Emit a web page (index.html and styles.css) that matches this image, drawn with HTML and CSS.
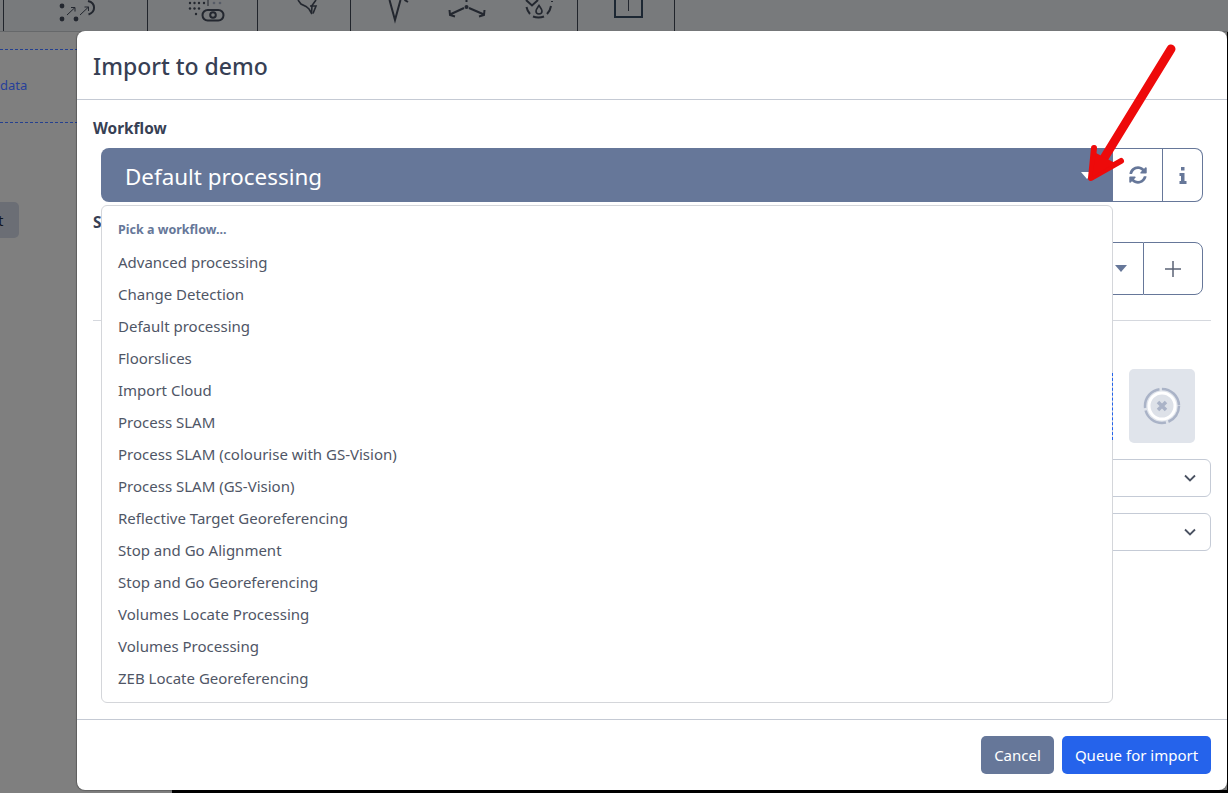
FILE: index.html
```html
<!DOCTYPE html>
<html lang="en">
<head>
<meta charset="utf-8">
<title>Import to demo</title>
<link rel="stylesheet" href="styles.css">
</head>
<body>
<div class="page">
  <div class="toolbar">
    <div class="cell cell-lead"></div>
    <div class="cell cell-a">
      <svg class="tool" viewBox="3 0 144 31" width="144" height="31">
        <g class="ink-fill"><circle cx="61" cy="6" r="2.4"/><circle cx="61" cy="19" r="2.4"/><circle cx="75" cy="19" r="2.4"/></g>
        <g class="ink-thin"><path d="M66 15 74 7.500M70 7.500h4v4M79 15 87.500 7M83.500 7h4v4"/></g>
        <path class="ink" d="M87 1C95 3 95 12 87.500 14.500"/>
      </svg>
    </div>
    <div class="cell cell-b">
      <svg class="tool" viewBox="147 0 110 31" width="110" height="31">
        <g class="ink-fill">
          <circle cx="189" cy="3" r="1.200"/><circle cx="193.500" cy="3" r="1.200"/><circle cx="198" cy="3" r="1.200"/><circle cx="203" cy="3" r="1.200"/>
          <circle cx="189" cy="8.500" r="1.200"/><circle cx="193.500" cy="8.500" r="1.200"/><circle cx="198" cy="8.500" r="1.200"/>
          <circle cx="195" cy="14" r="1.200"/>
        </g>
        <g class="ink-soft"><circle cx="213" cy="3" r="1.300"/><circle cx="219" cy="3" r="1.300"/></g>
        <path class="ink-thin" d="M207 0v6"/>
        <rect class="ink" x="201.500" y="10" width="21" height="10.500" rx="5.200"/>
        <circle class="ink" cx="212" cy="15" r="2.800"/>
      </svg>
    </div>
    <div class="cell cell-c">
      <svg class="tool" viewBox="257 0 93 31" width="93" height="31">
        <path class="ink-mid" d="M297 0 300 4 305 6.500 308 9 311 14M315 0 311 5.500 310.500 14"/>
        <path class="ink-mid" d="M309 6h6l-3 7.500"/>
      </svg>
    </div>
    <div class="cell cell-d">
      <svg class="tool" viewBox="350 0 227 31" width="227" height="31">
        <path class="ink" d="M388.500 0 394 20 399.500 0M403.500 0l3.500 2"/>
        <circle class="dot" cx="465.500" cy="7" r="2"/>
        <path class="ink" d="M465.500 0v2M463 8 449 14.500M448.500 10l.5 5 5 1.500M468 8 483 14.500M483.500 10l-.5 5-5 1.500"/>
        <path class="ink" d="M525 0l6 5.500 6-5.500M525.500 7a15 15 0 0 0 3.500 7M532 16.500a15 15 0 0 0 11 0M546 14a15 15 0 0 0 4-8M551 1v1"/>
        <path class="ink-mid" d="M538 5.500c-2 3-3 4-3 5.500a3 3 0 0 0 6 0c0-1.500-1-2.500-3-5.500z"/>
      </svg>
    </div>
    <div class="cell cell-e">
      <svg class="tool" viewBox="577 0 97 31" width="97" height="31">
        <path class="ink-box" d="M614 0V17H641V0"/>
        <path class="ink-thin" d="M627.500 0V11"/>
      </svg>
    </div>
  </div>

  <div class="backdrop-content">
    <div class="drop-strip"><a class="drop-link">data</a></div>
    <div class="back-btn"><span>t</span></div>
  </div>

  <div class="edge-right"></div>
  <div class="edge-bottom"></div>

  <section class="modal">
    <header class="modal-head"><h1 class="modal-title">Import to demo</h1></header>

    <div class="modal-body">
      <div class="field">
        <label class="label">Workflow</label>
        <div class="select-row">
          <div class="select-main">
            <span class="select-value">Default processing</span>
            <i class="caret caret-white"></i>
          </div>
          <div class="addon addon-w50" title="Refresh">
            <svg class="sync" viewBox="0 0 512 512" width="18" height="18"><path d="M370.720 133.280C339.458 104.008 298.888 87.962 255.848 88c-77.458.068-144.328 53.178-162.791 126.850-1.344 5.363-6.122 9.150-11.651 9.150H24.103c-7.498 0-13.194-6.807-11.807-14.176C33.933 94.924 134.813 8 256 8c66.448 0 126.791 26.136 171.315 68.685L463.030 40.970C478.149 25.851 504 36.559 504 57.941V192c0 13.255-10.745 24-24 24H345.941c-21.382 0-32.090-25.851-16.971-40.971l41.750-41.749zM32 296h134.059c21.382 0 32.090 25.851 16.971 40.971l-41.750 41.750c31.262 29.273 71.835 45.319 114.876 45.280 77.418-.07 144.315-53.144 162.787-126.849 1.344-5.363 6.122-9.150 11.651-9.150h57.304c7.498 0 13.194 6.807 11.807 14.176C478.067 417.076 377.187 504 256 504c-66.448 0-126.791-26.136-171.315-68.685L48.970 471.030C33.851 486.149 8 475.441 8 454.059V320c0-13.255 10.745-24 24-24z"/></svg>
          </div>
          <div class="addon addon-end addon-w40" title="Info">
            <svg class="info" viewBox="0 0 8 17" width="8" height="17"><path d="M2 0h3.500v3.500H2zM.500 6H5.500v8H7.500v3H.500v-3H2V9H.500z"/></svg>
          </div>
        </div>
      </div>

      <div class="field field-next">
        <label class="label">Site</label>
        <div class="select-row select-row-low">
          <div class="select-outline"><i class="caret caret-slate"></i></div>
          <div class="addon addon-end addon-w60">
            <svg class="plus" viewBox="0 0 16 16" width="16" height="16"><path d="M8 0v16M0 8h16"/></svg>
          </div>
        </div>
      </div>

      <hr class="rule">

      <div class="upload-row">
        <div class="upload-drop"></div>
        <div class="upload-thumb">
          <svg viewBox="0 0 38 38" width="38" height="38">
            <circle class="thumb-inner" cx="19" cy="19" r="13"/>
            <circle class="thumb-ring" cx="19" cy="19" r="17"/>
            <path class="thumb-x" d="M15 15l8 8M23 15l-8 8"/>
          </svg>
        </div>
      </div>

      <div class="plain-select"><svg class="chev" viewBox="0 0 12 8" width="12" height="8"><path d="M1 1.500 6 6.500 11 1.500"/></svg></div>
      <div class="plain-select"><svg class="chev" viewBox="0 0 12 8" width="12" height="8"><path d="M1 1.500 6 6.500 11 1.500"/></svg></div>
    </div>

    <footer class="modal-foot">
      <button class="btn btn-muted">Cancel</button>
      <button class="btn btn-primary">Queue for import</button>
    </footer>

    <div class="menu">
      <div class="menu-head">Pick a workflow...</div>
      <ul class="menu-list">
        <li>Advanced processing</li>
        <li>Change Detection</li>
        <li>Default processing</li>
        <li>Floorslices</li>
        <li>Import Cloud</li>
        <li>Process SLAM</li>
        <li>Process SLAM (colourise with GS-Vision)</li>
        <li>Process SLAM (GS-Vision)</li>
        <li>Reflective Target Georeferencing</li>
        <li>Stop and Go Alignment</li>
        <li>Stop and Go Georeferencing</li>
        <li>Volumes Locate Processing</li>
        <li>Volumes Processing</li>
        <li>ZEB Locate Georeferencing</li>
      </ul>
    </div>
  </section>

  <svg class="red-arrow" viewBox="0 0 100 145" width="100" height="145">
    <path class="arrow-shaft" d="M93 8 20 127"/>
    <path class="arrow-head" d="M16 107 13 137 43 120"/>
    <path class="arrow-fill" d="M14 136 18 112 37 122z"/>
  </svg>
</div>
</body>
</html>
```
FILE: styles.css
```css
* { box-sizing: border-box; }
html, body { margin: 0; padding: 0; }
body {
  font-family: "Noto Sans", "Open Sans", sans-serif;
  background: #7f7f7f;
  color: #4b5262;
}
.page {
  position: relative;
  width: 1228px;
  height: 793px;
  overflow: hidden;
  background: #7f7f7f;
}

/* toolbar behind the backdrop */
.toolbar {
  display: flex;
  height: 32px;
  background: #787a7c;
  border-bottom: 1px solid #66686a;
}
.cell { border-right: 1px solid #20242b; height: 31px; flex: none; }
.cell-lead { width: 4px; }
.cell-a { width: 144px; }
.cell-b { width: 110px; }
.cell-c { width: 93px; }
.cell-d { width: 227px; }
.cell-e { width: 97px; }
.tool { display: block; }
.ink, .ink-thin, .ink-mid, .ink-box { fill: none; stroke: #23272f; }
.ink { stroke-width: 2; }
.ink-mid { stroke-width: 1.600; }
.ink-thin { stroke-width: 1; }
.ink-box { stroke: #1c2733; stroke-width: 2; }
.ink-fill, .dot { fill: #23272f; }
.ink-soft { fill: #565c66; }

/* page content behind the backdrop */
.backdrop-content { display: flex; flex-direction: column; }
.drop-strip {
  display: flex;
  align-items: center;
  margin-top: 17px;
  height: 74px;
  padding-bottom: 3px;
  border-top: 1px dashed #25408f;
  border-bottom: 1px dashed #25408f;
}
.drop-link {
  font-size: 13px;
  color: #27409a;
}
.back-btn {
  display: flex;
  align-items: center;
  margin-top: 79px;
  width: 19px;
  height: 36px;
  border-radius: 0 5px 5px 0;
  background: #6b6e75;
  color: #11151f;
  font-size: 15px;
}
.back-btn span { margin-left: -2px; }
.edge-right {
  position: absolute;
  top: 32px;
  right: 0;
  bottom: 0;
  width: 1px;
  background: #000;
}
.edge-bottom {
  position: absolute;
  left: 172px;
  right: 0;
  bottom: 0;
  height: 3px;
  background: #000;
}

/* modal */
.modal {
  position: absolute;
  left: 77px;
  top: 31px;
  width: 1150px;
  height: 759px;
  display: flex;
  flex-direction: column;
  background: #fff;
  border-radius: 8px;
  box-shadow: -1px 0 1px rgba(0, 0, 0, .25), 0 1px 1px rgba(0, 0, 0, .2);
}
.modal-head {
  flex: none;
  height: 69px;
  padding: 2px 16px 0;
  display: flex;
  align-items: center;
  border-bottom: 1px solid #c5cad4;
}
.modal-title {
  margin: 0;
  font-size: 23px;
  font-weight: 500;
  color: #374054;
}
.modal-body {
  flex: 1;
  padding: 19px 16px 0 16px;
  overflow: hidden;
}
.label {
  display: block;
  height: 20px;
  line-height: 20px;
  font-size: 15.400px;
  font-weight: 700;
  color: #374054;
}
.field-next { margin-top: 11px; }
.select-row {
  display: flex;
  height: 54px;
  margin: 9px 8px 0;
}
.select-row-low { height: 53px; }
.select-main {
  flex: 1;
  display: flex;
  align-items: center;
  justify-content: space-between;
  padding: 0 20px 0 24px;
  background: #667799;
  border-radius: 8px 0 0 8px;
  color: #fff;
  font-size: 22.400px;
}
.select-value { padding-top: 2px; }
.select-outline {
  flex: 1;
  display: flex;
  align-items: center;
  justify-content: flex-end;
  padding-right: 16px;
  border: 1px solid #667799;
  border-right: 0;
  border-radius: 8px 0 0 8px;
}
.caret {
  display: block;
  width: 0;
  height: 0;
  border-left: 6px solid transparent;
  border-right: 6px solid transparent;
  border-top: 7px solid;
}
.caret-white { color: #fff; }
.caret-slate { color: #667799; }
.addon {
  flex: none;
  display: flex;
  align-items: center;
  justify-content: center;
  border: 1px solid #667799;
  border-left-width: 0;
  background: #fff;
}
.addon-w50 { width: 50px; }
.addon-w40 { width: 40px; }
.addon-w60 { width: 60px; border-left-width: 1px; }
.addon-end { border-radius: 0 8px 8px 0; }
.sync, .info { fill: #667799; }
.plus { fill: none; stroke: #5b6375; stroke-width: 1.500; }
.rule {
  margin: 25px 0 0;
  border: 0;
  border-top: 1px solid #d5d8de;
}
.upload-row {
  display: flex;
  align-items: center;
  gap: 16px;
  margin: 48px 0 0 24px;
  padding-right: 16px;
}
.upload-drop {
  position: relative;
  z-index: 1;
  flex: 1;
  height: 67px;
  border-right: 1px dashed #2563eb;
}
.upload-thumb {
  flex: none;
  width: 66px;
  height: 74px;
  display: flex;
  align-items: center;
  justify-content: center;
  background: #e0e4eb;
  border-radius: 5px;
}
.thumb-inner { fill: #dde1e8; stroke: #fff; stroke-width: 3; }
.thumb-ring { fill: none; stroke: #aab3c7; stroke-width: 2.500; stroke-dasharray: 20 2.500 26 2.500 26 2.500 26 2; }
.thumb-x { fill: none; stroke: #aab3c7; stroke-width: 3.500; }
.plain-select {
  display: flex;
  align-items: center;
  justify-content: flex-end;
  height: 38px;
  margin: 16px 0 0 24px;
  padding-right: 14px;
  border: 1px solid #c5cbd6;
  border-radius: 6px;
}
.chev { fill: none; stroke: #4b5262; stroke-width: 1.800; }
.modal-foot {
  flex: none;
  height: 71px;
  display: flex;
  align-items: center;
  justify-content: flex-end;
  gap: 8px;
  padding: 0 16px 0 0;
  border-top: 1px solid #c5cad4;
}
.btn {
  height: 38px;
  border: 0;
  border-radius: 5px;
  color: #fff;
  font-family: inherit;
  font-size: 15px;
  padding: 0;
}
.btn-muted { width: 73px; background: #667799; }
.btn-primary { width: 149px; background: #2563eb; }

/* dropdown */
.menu {
  position: absolute;
  left: 24px;
  top: 174px;
  width: 1012px;
  height: 498px;
  padding: 8px 0;
  background: #fff;
  border: 1px solid #d4d6da;
  border-radius: 6px;
}
.menu-head {
  height: 32px;
  line-height: 32px;
  padding-left: 16px;
  font-size: 12.500px;
  font-weight: 700;
  color: #667799;
}
.menu-list { list-style: none; margin: 0; padding: 0; }
.menu-list li {
  height: 32px;
  line-height: 32px;
  padding-left: 16px;
  font-size: 15px;
  color: #4f5666;
}

/* annotation */
.red-arrow {
  position: absolute;
  left: 1078px;
  top: 41px;
}
.arrow-shaft { fill: none; stroke: #ee0a0a; stroke-width: 9; stroke-linecap: round; }
.arrow-head { fill: none; stroke: #ee0a0a; stroke-width: 6; stroke-linecap: round; stroke-linejoin: round; }
.arrow-fill { fill: #ee0a0a; }
```
